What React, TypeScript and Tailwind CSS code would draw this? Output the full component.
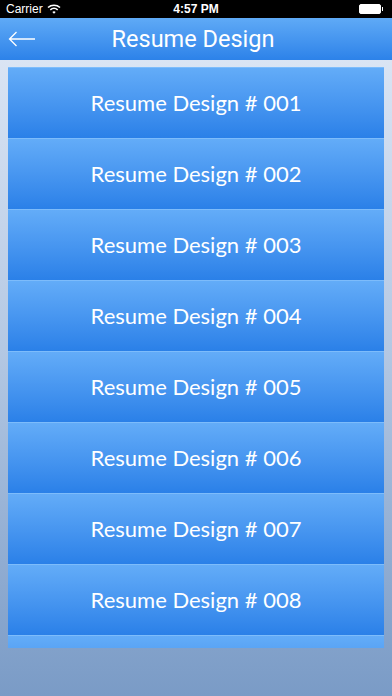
import React from "react";

const rows = ["001", "002", "003", "004", "005", "006", "007", "008"];

export default function App() {
  return (
    <div className="w-[392px] h-[696px] overflow-hidden flex flex-col bg-gradient-to-b from-[#e2eaf7] via-[#b4c8e3] to-[#7a9bc6]" style={{ fontFamily: "'Liberation Sans', Arial, sans-serif" }}>
      {/* status bar */}
      <div className="h-[18px] bg-black flex items-center justify-between px-[6px] text-white text-[12px] relative shrink-0">
        <div className="flex items-center gap-[4px]">
          <span>Carrier</span>
          <svg width="14" height="10" viewBox="0 0 14 10">
            <path d="M1 3.5 A9 9 0 0 1 13 3.5" stroke="white" strokeWidth="1.6" fill="none" />
            <path d="M3.3 5.8 A5.8 5.8 0 0 1 10.7 5.8" stroke="white" strokeWidth="1.6" fill="none" />
            <path d="M5.3 8 L7 9.8 L8.7 8 A2.6 2.6 0 0 0 5.3 8 Z" fill="white" />
          </svg>
        </div>
        <span className="absolute left-1/2 -translate-x-1/2 font-bold text-[12px]">4:57 PM</span>
        <div className="flex items-center mr-[3px]">
          <div className="w-[22px] h-[10px] border border-white rounded-[2px] bg-white" />
          <div className="w-[1.5px] h-[4px] bg-white ml-[1px]" />
        </div>
      </div>
      {/* nav */}
      <div className="h-[42px] shrink-0 bg-gradient-to-b from-[#5faaf6] to-[#2c82e9] relative flex items-center justify-center">
        <svg className="absolute left-[8px] top-[13px]" width="28" height="16" viewBox="0 0 28 16">
          <path d="M27 8 H1.5 M8.5 1 L1.5 8 L8.5 15" stroke="white" strokeWidth="1.3" fill="none" />
        </svg>
        <span className="text-white text-[23.5px] ml-[-6px] mt-[2px]" style={{ fontFamily: "Roboto, 'Liberation Sans', sans-serif" }}>Resume Design</span>
      </div>
      {/* list */}
      <div className="mt-[7px] mx-[8px] h-[581px] overflow-hidden flex flex-col">
        {rows.map((r) => (
          <div key={r} className="h-[71px] shrink-0 bg-gradient-to-b from-[#63acf8] to-[#2a80e8] border-t border-[#7dbcfb] flex items-center justify-center">
            <span className="text-white text-[22px] -mt-[2px]" style={{ fontFamily: "Lato, 'Open Sans', sans-serif" }}>Resume Design # {r}</span>
          </div>
        ))}
        <div className="h-[71px] shrink-0 bg-gradient-to-b from-[#63acf8] to-[#2a80e8] border-t border-[#7dbcfb]" />
      </div>
    </div>
  );
}
